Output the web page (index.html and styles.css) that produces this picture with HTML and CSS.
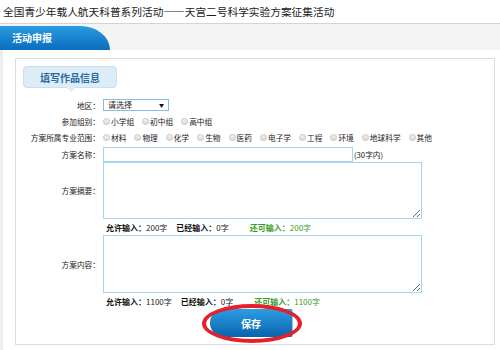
FILE: index.html
```html
<!DOCTYPE html>
<html lang="zh-CN">
<head>
  <meta charset="UTF-8" />
  <title>活动申报</title>
  <link rel="stylesheet" href="styles.css">
</head>
<body>

  <div class="page-title">全国青少年载人航天科普系列活动——天宫二号科学实验方案征集活动</div>

  <div class="tab-bar">
    <div class="tab">活动申报</div>
  </div>

  <div class="main">
    <div class="panel">
      <div class="tag">填写作品信息</div>

      <form class="form">
        <div class="row row-area">
          <label class="lbl">地区：</label>
          <div class="field">
            <div class="select">请选择<span class="arrow">▼</span></div>
          </div>
        </div>

        <div class="row row-group">
          <label class="lbl">参加组别：</label>
          <div class="field radios">
            <label class="opt"><input type="radio" name="group">小学组</label>
            <label class="opt"><input type="radio" name="group">初中组</label>
            <label class="opt"><input type="radio" name="group">高中组</label>
          </div>
        </div>

        <div class="row row-major">
          <label class="lbl">方案所属专业范围：</label>
          <div class="field radios">
            <label class="opt"><input type="radio" name="major">材料</label>
            <label class="opt"><input type="radio" name="major">物理</label>
            <label class="opt"><input type="radio" name="major">化学</label>
            <label class="opt"><input type="radio" name="major">生物</label>
            <label class="opt"><input type="radio" name="major">医药</label>
            <label class="opt"><input type="radio" name="major">电子学</label>
            <label class="opt"><input type="radio" name="major">工程</label>
            <label class="opt"><input type="radio" name="major">环境</label>
            <label class="opt"><input type="radio" name="major">地球科学</label>
            <label class="opt"><input type="radio" name="major">其他</label>
          </div>
        </div>

        <div class="row row-name">
          <label class="lbl">方案名称：</label>
          <div class="field">
            <input class="text-input" type="text">
            <span class="hint">(30字内)</span>
          </div>
        </div>

        <div class="row row-summary">
          <label class="lbl">方案摘要：</label>
          <div class="field">
            <textarea class="area area-summary"></textarea>
          </div>
        </div>

        <div class="row row-count">
          <span class="lbl"></span>
          <div class="field counter">
            <span class="count-item"><b>允许输入：</b>200字</span>
            <span class="count-item"><b>已经输入：</b>0字</span>
            <span class="count-item left"><b>还可输入：</b>200字</span>
          </div>
        </div>

        <div class="row row-content">
          <label class="lbl">方案内容：</label>
          <div class="field">
            <textarea class="area area-content"></textarea>
          </div>
        </div>

        <div class="row row-count">
          <span class="lbl"></span>
          <div class="field counter">
            <span class="count-item"><b>允许输入：</b>1100字</span>
            <span class="count-item"><b>已经输入：</b>0字</span>
            <span class="count-item left"><b>还可输入：</b>1100字</span>
          </div>
        </div>

        <div class="row row-submit">
          <span class="lbl"></span>
          <div class="field">
            <div class="save-wrap">
              <button type="button" class="save-btn">保存</button>
              <span class="circle-mark"></span>
            </div>
          </div>
        </div>
      </form>
    </div>
  </div>

</body>
</html>
```

FILE: styles.css
```css
* {
  margin: 0;
  padding: 0;
  box-sizing: border-box;
}

body {
  width: 500px;
  height: 350px;
  overflow: hidden;
  background-color: #fff;
  font-family: "Noto Sans CJK SC", "Liberation Sans", sans-serif;
  color: #333;
}

.page-title {
  height: 24px;
  padding: 5px 0 0 3px;
  font-size: 10.7px;
  line-height: 14px;
  color: #1a1a1a;
  white-space: nowrap;
  border-bottom: 1px solid #d4d4d4;
}

/* tab bar */
.tab-bar {
  height: 26px;
  padding-top: 2px;
  background-color: #f4f4f4;
}

.tab {
  width: 110px;
  height: 24px;
  padding-left: 12px;
  font-size: 10px;
  font-weight: bold;
  line-height: 24px;
  color: #fff;
  background: linear-gradient(to bottom, #2a9be2, #0b6dbd);
  border-radius: 0 30px 0 0 / 0 24px 0 0;
}

/* main panel */
.main {
  height: 300px;
  padding: 8px 5px 0 12px;
  border-left: 3px solid #eee;
}

.panel {
  height: 287px;
  padding: 7px 0 0 7px;
  border: 1px solid #dcdcdc;
}

.tag {
  position: relative;
  width: 94px;
  height: 22px;
  font-size: 10px;
  font-weight: bold;
  line-height: 21px;
  text-align: center;
  color: #2d6a9f;
  background-color: #dcedf8;
  border: 1px solid #c8dff0;
  border-radius: 4px;
}

.tag::after {
  content: "";
  position: absolute;
  left: 42px;
  bottom: -5px;
  border-left: 5px solid transparent;
  border-right: 5px solid transparent;
  border-top: 5px solid #dcedf8;
}

/* form */
.form {
  margin-top: 9px;
  margin-left: -7px;
  font-size: 7.7px;
  color: #222;
}

.row {
  display: grid;
  grid-template-columns: 84px 1fr;
  column-gap: 3px;
  align-items: center;
}

.lbl {
  text-align: right;
  white-space: nowrap;
}

.field {
  display: flex;
  align-items: center;
}

.row-area { height: 16px; }
.row-group { height: 17px; }
.row-major { height: 15px; }
.row-name { height: 17px; padding-top: 1px; }
.row-summary { height: 57px; }
.row-content { height: 58px; }
.row-count { height: 16px; }
.row-submit { height: 34px; align-items: start; }

.select {
  position: relative;
  width: 66px;
  height: 12px;
  padding-left: 4px;
  line-height: 10px;
  font-size: 8px;
  color: #222;
  background: #fff;
  border: 1px solid #86bce2;
}

.select .arrow {
  position: absolute;
  right: 4px;
  top: 0;
  font-size: 5px;
  color: #111;
}

.radios {
  white-space: nowrap;
}

.opt {
  display: flex;
  align-items: center;
  margin-right: 8px;
}

.opt input {
  appearance: none;
  width: 7px;
  height: 7px;
  margin-right: 1px;
  border: 1px solid #c4c4c4;
  border-radius: 50%;
  background: linear-gradient(to bottom, #f2f2f2, #dcdcdc);
}

.text-input {
  width: 250px;
  height: 15px;
  border: 1px solid #a6d6ee;
}

.hint {
  margin-left: 1px;
}

.area {
  display: block;
  width: 319px;
  border: 1px solid #a6d6ee;
  resize: both;
}

.area-summary { height: 57px; }
.area-content { height: 58px; }

.counter {
  padding-left: 3px;
  font-size: 8px;
  white-space: nowrap;
}

.counter b {
  color: #111;
}

.count-item {
  margin-right: 9px;
}

.count-item.left {
  margin-left: 12px;
  color: #3a9b2a;
}

.counter .count-item.left b {
  color: #3a9b2a;
}

/* save button */
.save-wrap {
  position: relative;
  margin-left: 107px;
}

.save-btn {
  display: block;
  width: 83px;
  height: 28px;
  font-family: "Noto Sans CJK SC", sans-serif;
  font-size: 10px;
  font-weight: bold;
  color: #fff;
  background: linear-gradient(to bottom, #2c9ee4, #0a63ac);
  border: none;
  border-right: 1px solid #9cc6e6;
  border-radius: 14px 2px 2px 14px;
}

.circle-mark {
  position: absolute;
  left: -8px;
  top: -5px;
  width: 100px;
  height: 39px;
  border: 4px solid #e5202a;
  border-radius: 50%;
}
```
